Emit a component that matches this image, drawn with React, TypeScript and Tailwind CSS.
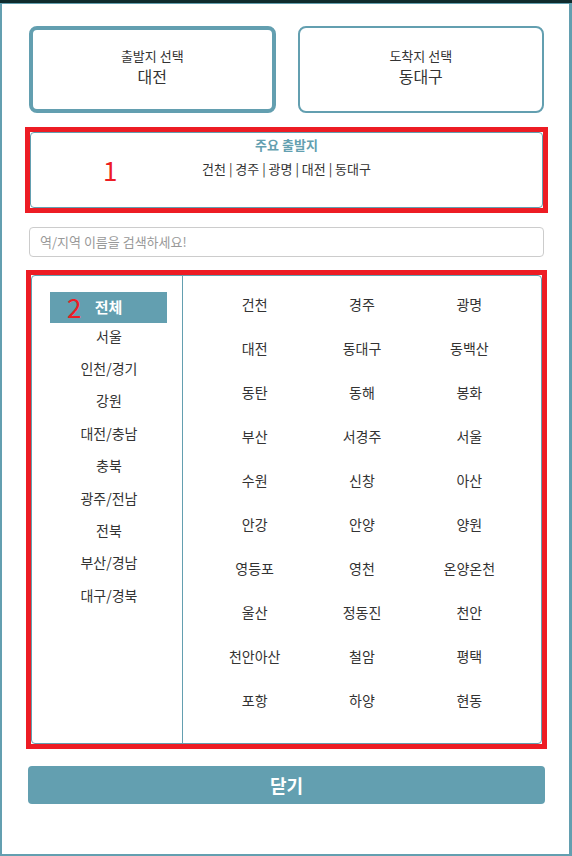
import React from 'react';

const REGIONS = ['서울', '인천/경기', '강원', '대전/충남', '충북', '광주/전남', '전북', '부산/경남', '대구/경북'];

const STATIONS = [
  '건천', '경주', '광명',
  '대전', '동대구', '동백산',
  '동탄', '동해', '봉화',
  '부산', '서경주', '서울',
  '수원', '신창', '아산',
  '안강', '안양', '양원',
  '영등포', '영천', '온양온천',
  '울산', '정동진', '천안',
  '천안아산', '철암', '평택',
  '포항', '하양', '현동',
];

const App: React.FC = () => {
  return (
    <div
      className="w-[572px] h-[856px] bg-[#0f2b2d] pt-[3px] overflow-hidden"
      style={{ fontFamily: '"Noto Sans CJK KR", "Noto Sans", sans-serif' }}
    >
      <div className="h-[853px] bg-white border-t border-l-2 border-r-[3px] border-b-2 border-[#639fb0] text-[#333]">
        <div className="ml-[26px] w-[517px] pt-[22px]">
          {/* 출발/도착 선택 */}
          <div className="flex gap-[22px] px-[1px]">
            <div className="w-[247px] h-[87px] rounded-[8px] border-4 border-[#639fb0] flex flex-col items-center justify-center pb-[6px]">
              <span className="text-[13px] leading-[18px]">출발지 선택</span>
              <span className="text-[16px] leading-[22px]">대전</span>
            </div>
            <div className="w-[247px] h-[87px] rounded-[8px] border-2 border-[#639fb0] flex flex-col items-center justify-center pb-[6px]">
              <span className="text-[13px] leading-[18px]">도착지 선택</span>
              <span className="text-[16px] leading-[22px]">동대구</span>
            </div>
          </div>

          {/* 주요 출발지 */}
          <div className="relative mt-[14px] -mx-[3px] border-[5px] border-[#ed1c24]">
            <div className="h-[76px] rounded-[4px] border border-[#639fb0] flex flex-col items-center pt-[3px]">
              <span className="text-[13px] leading-[18px] font-bold text-[#639fb0]">주요 출발지</span>
              <span className="mt-[6px] text-[13px] leading-[18px]">건천 | 경주 | 광명 | 대전 | 동대구</span>
            </div>
            <span className="absolute left-[73px] top-[23px] text-[26px] leading-[30px] text-[#ed1c24]">1</span>
          </div>

          {/* 검색 */}
          <div className="mt-[14px] px-[1px]">
            <div className="h-[30px] rounded-[4px] border border-[#cccccc] flex items-center px-[10px]">
              <span className="text-[13px] text-[#999]">역/지역 이름을 검색하세요!</span>
            </div>
          </div>

          {/* 지역 / 역 목록 */}
          <div className="relative mt-[13px] -mx-[2px] border-[5px] border-[#ed1c24]">
            <div className="h-[469px] rounded-[4px] border border-[#639fb0] flex">
              <div className="w-[151px] border-r border-[#639fb0] pt-[16px]">
                <div className="ml-[18px] w-[117px] h-[31px] bg-[#639fb0] flex items-center justify-center">
                  <span className="text-[15px] font-bold text-white">전체</span>
                </div>
                <div className="-mt-[3px]">
                  {REGIONS.map(r => (
                    <div key={r} className="h-[32.4px] flex items-center justify-center pl-[4px] text-[14px]">
                      {r}
                    </div>
                  ))}
                </div>
              </div>
              <div className="flex-1 px-[18px] pt-[6px] grid grid-cols-3 content-start">
                {STATIONS.map(s => (
                  <div key={s} className="h-[44px] flex items-center justify-center text-[14px]">
                    {s}
                  </div>
                ))}
              </div>
            </div>
            <span className="absolute left-[36px] top-[17px] text-[26px] leading-[30px] text-[#ed1c24]">2</span>
          </div>

          {/* 닫기 */}
          <button className="mt-[17px] w-full h-[38px] rounded-[4px] bg-[#639fb0] text-white text-[18px] font-bold">
            닫기
          </button>
        </div>
      </div>
    </div>
  );
};

export default App;
